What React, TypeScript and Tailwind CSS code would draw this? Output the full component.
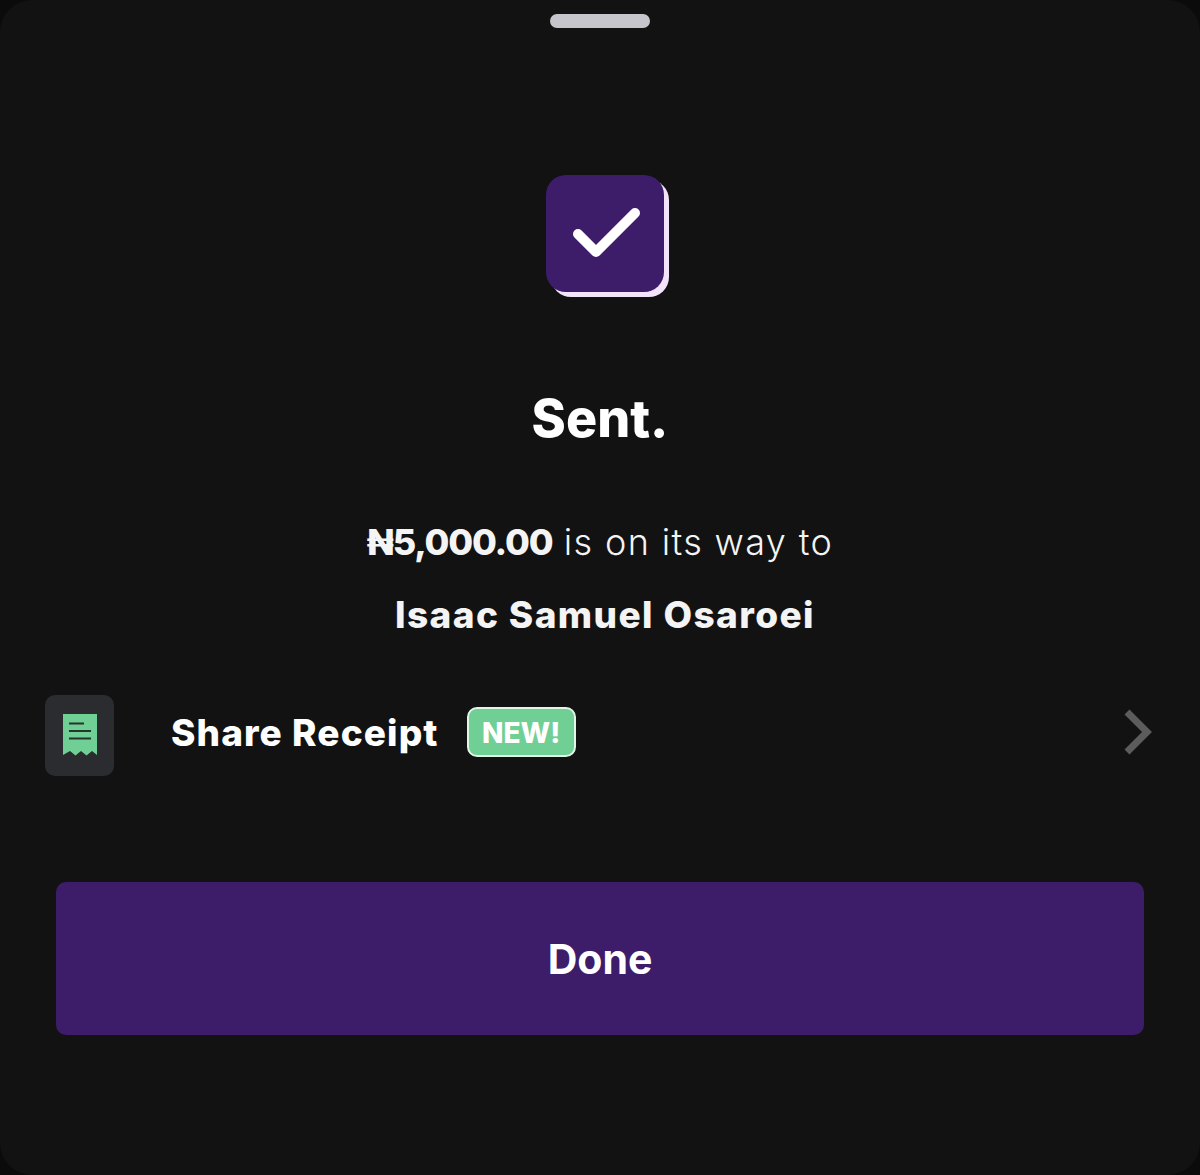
function SentBadge() {
  return (
    <div className="h-[117px] w-[118px] rounded-[20px] bg-[#3d1c69] shadow-[5px_5px_0_0_#f1e4fb]">
      <svg width="118" height="117" viewBox="0 0 118 117" fill="none">
        <path d="M32 59 L50 77 L89 38" stroke="#ffffff" strokeWidth="10" strokeLinecap="round" strokeLinejoin="round" />
      </svg>
    </div>
  );
}

function ReceiptIcon() {
  return (
    <div className="flex h-[81px] w-[69px] items-center justify-center rounded-[10px] bg-[#2b2c2f]">
      <svg className="mb-[2px]" width="34" height="42" viewBox="0 0 34 42">
        <path d="M0 0 H34 V41 L29 37 L23.5 41.5 L18 37 L12.5 41.5 L7 37 L0 41 Z" fill="#70cf94" />
        <path d="M6 9.5 H21 M6 17 H28 M6 24.5 H28" stroke="#24352c" strokeWidth="2" />
      </svg>
    </div>
  );
}

export default function App() {
  return (
    <div className="h-[1175px] w-[1200px] bg-[#0b0b0c] font-['Inter',sans-serif]">
      <div className="flex h-full flex-col items-center rounded-[32px] bg-[#121212] pt-[14px] text-white">
        <div className="h-[14px] w-[100px] rounded-[7px] bg-[#c6c5cb]" />

        <div className="mt-[147px] ml-[10px]">
          <SentBadge />
        </div>

        <h1 className="mt-[95px] text-[52px] leading-[64px] font-extrabold">Sent.</h1>

        <p className="mt-[66px] text-[36px] leading-[50px] font-light tracking-[1.35px] text-[#f4f4f4]">
          <span className="font-extrabold tracking-[-1.2px]">₦5,000.00</span> is on its way to
        </p>
        <p className="mt-[23px] ml-[10px] text-[37px] leading-[50px] font-extrabold tracking-[1.4px] text-[#f4f4f4]">
          Isaac Samuel Osaroei
        </p>

        <div className="mt-[55px] flex w-full items-center pr-[47px] pl-[45px]">
          <ReceiptIcon />
          <span className="mb-[6px] ml-[57px] text-[37px] leading-[50px] font-extrabold tracking-[1.1px]">Share Receipt</span>
          <span className="mb-[8px] ml-[28px] flex h-[50px] w-[109px] items-center justify-center rounded-[10px] border-2 border-[#dff5e7] bg-[#70cf94] pt-[3px] text-[28px] font-extrabold">
            NEW!
          </span>
          <svg className="mb-[8px] ml-auto" width="30" height="46" viewBox="0 0 30 46" fill="none">
            <path d="M4 3 L24 23 L4 43" stroke="#5c5c5c" strokeWidth="7" />
          </svg>
        </div>

        <button className="mt-[106px] flex h-[153px] w-[1088px] items-center justify-center rounded-[10px] bg-[#3d1c69] pt-[3px] text-[41px] font-bold">
          Done
        </button>
      </div>
    </div>
  );
}
